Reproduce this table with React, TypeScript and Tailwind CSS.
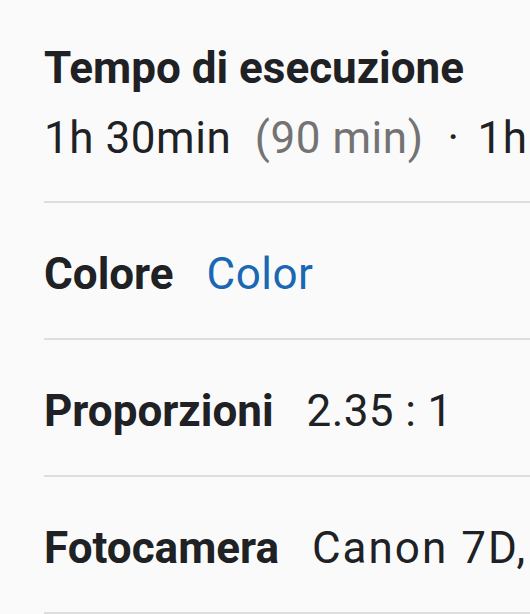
const rows = [
  { label: "Colore", value: "Color", cls: "tracking-[0.5px] text-[#1a67b3]" },
  { label: "Proporzioni", value: "2.35 : 1", cls: "tracking-[0.4px]" },
  { label: "Fotocamera", value: "Canon 7D, Canon EF 50mm f/1.4", cls: "tracking-[2px]" },
];

export default function App() {
  return (
    <div className="min-h-screen w-[530px] overflow-hidden bg-[#fafafa] pl-[44px] font-['Roboto',sans-serif] text-[#202124]">
      {/* Runtime */}
      <div className="border-b-2 border-[#dedede] pt-[44px] pb-[38px]">
        <h3 className="text-[44px] leading-[49px] font-bold">Tempo di esecuzione</h3>
        <p className="mt-[21px] text-[44px] leading-[49px] tracking-[0.55px] whitespace-nowrap">
          1h 30min <span className="ml-[12px] text-[#737373]">(90 min)</span>
          <span className="ml-[24px] mr-[18px]">·</span>1h 30min
        </p>
      </div>

      {rows.map((row) => (
        <div
          key={row.label}
          className="flex items-baseline gap-[33px] whitespace-nowrap border-b-2 border-[#dedede] pt-[47px] pb-[39px] text-[44px] leading-[49px]"
        >
          <span className="font-bold">{row.label}</span>
          <span className={row.cls}>{row.value}</span>
        </div>
      ))}
    </div>
  );
}
